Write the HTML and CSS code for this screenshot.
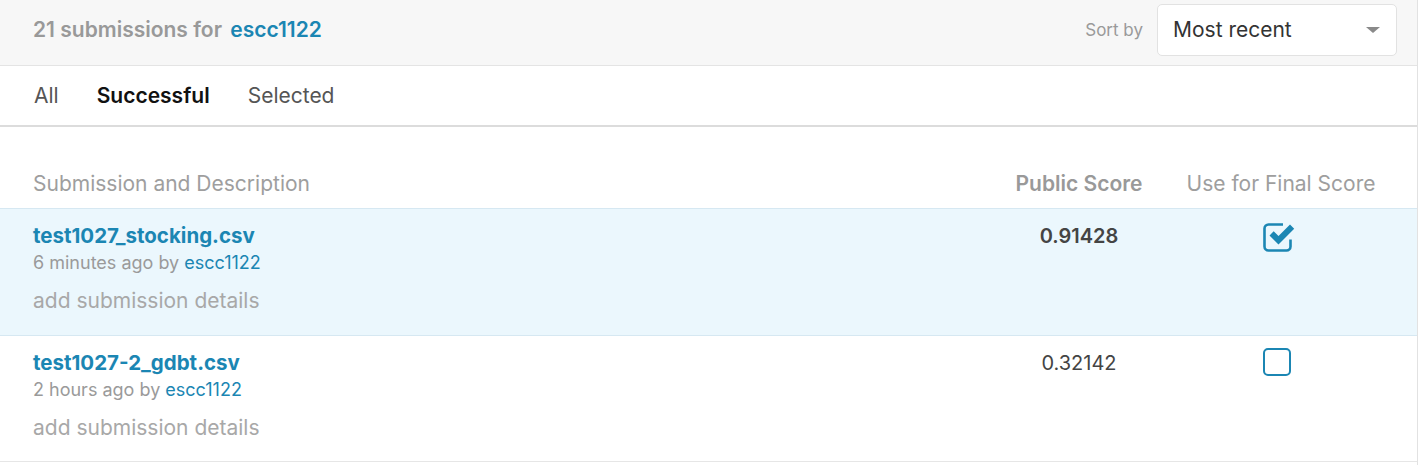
FILE: index.html
```html
<!DOCTYPE html>
<html>
<head>
<meta charset="utf-8">
<link rel="stylesheet" href="styles.css">
</head>
<body>
<div class="page">
  <div class="header">
    <div class="count">21 submissions for <a class="user" href="#">escc1122</a></div>
    <div class="sort">
      <span class="sort-label">Sort by</span>
      <div class="select">
        <span>Most recent</span>
        <span class="caret"></span>
      </div>
    </div>
  </div>
  <div class="tabs">
    <span class="tab">All</span>
    <span class="tab active">Successful</span>
    <span class="tab">Selected</span>
  </div>
  <div class="table">
    <div class="row head">
      <div class="c-name">Submission and Description</div>
      <div class="c-score strong">Public Score</div>
      <div class="c-final">Use for Final Score</div>
    </div>
    <div class="row item selected">
      <div class="c-name">
        <div class="title">test1027_stocking.csv</div>
        <div class="meta">6 minutes ago by <a href="#">escc1122</a></div>
        <div class="details">add submission details</div>
      </div>
      <div class="c-score score bold">0.91428</div>
      <div class="c-final">
        <svg class="cb" width="36" height="32" viewBox="0 0 36 32">
          <path d="M22 4.5H7.5a4 4 0 0 0-4 4v18a4 4 0 0 0 4 4h18a4 4 0 0 0 4-4v-7" fill="none" stroke="#1b86b3" stroke-width="2.6"/>
          <path d="M8.5 15.5l4.2-4.2 4.8 4.8L29 4.6l4.2 4.2-15.7 15.7z" fill="#1b86b3"/>
        </svg>
      </div>
    </div>
    <div class="row item">
      <div class="c-name">
        <div class="title">test1027-2_gdbt.csv</div>
        <div class="meta">2 hours ago by <a href="#">escc1122</a></div>
        <div class="details">add submission details</div>
      </div>
      <div class="c-score score">0.32142</div>
      <div class="c-final">
        <span class="box"></span>
      </div>
    </div>
  </div>
</div>
</body>
</html>
```

FILE: styles.css
```css
* { box-sizing: border-box; }
body {
  margin: 0;
  font-family: Inter, Roboto, "Liberation Sans", sans-serif;
  color: #333;
  background: #fff;
}
a { color: #1b86b3; text-decoration: none; }
.page {
  width: 1418px;
  border-right: 1px solid #e2e2e2;
  height: 465px;
  overflow: hidden;
}
.header {
  height: 66px;
  background: #f7f7f7;
  border-bottom: 1px solid #e4e4e4;
  display: flex;
  align-items: center;
  justify-content: space-between;
  padding: 0 20px 6px 33px;
}
.count {
  font-size: 21px;
  font-weight: 600;
  color: #999;
}
.count .user { margin-left: 3px; }
.sort { display: flex; align-items: center; gap: 14px; }
.sort-label { font-size: 17px; color: #9a9a9a; }
.select {
  width: 240px;
  height: 52px;
  background: #fff;
  border: 1px solid #e2e2e2;
  border-radius: 5px;
  display: flex;
  align-items: center;
  justify-content: space-between;
  padding: 0 16px 0 15px;
  font-size: 21px;
  color: #333;
}
.caret {
  width: 0; height: 0;
  border-left: 7px solid transparent;
  border-right: 7px solid transparent;
  border-top: 6px solid #8a8a8a;
}
.tabs {
  height: 61px;
  border-bottom: 2px solid #dcdcdc;
  display: flex;
  align-items: center;
  gap: 38px;
  padding-left: 34px;
  font-size: 21px;
  color: #555;
}
.tab.active { color: #111; font-weight: 600; }
.row {
  display: grid;
  grid-template-columns: 1fr 184px 220px;
  padding: 0 26px 0 33px;
}
.c-score, .c-final { text-align: center; }
.head {
  height: 82px;
  align-items: center;
  font-size: 21px;
  color: #9e9e9e;
  border-bottom: 1px solid #d6e8f2;
  padding-top: 32px;
}
.head .c-final { padding-left: 8px; }
.head .strong { font-weight: 600; color: #999; }
.item {
  height: 126px;
  padding-top: 14px;
  border-bottom: 1px solid #e6e6e6;
}
.item.selected {
  height: 127px;
  background: #ebf7fd;
  border-bottom: 1px solid #d6e8f2;
}
.title {
  font-size: 20.5px;
  line-height: 26px;
  font-weight: 700;
  color: #1b86b3;
}
.meta {
  font-size: 18px;
  line-height: 24px;
  margin-top: 2px;
  color: #9a9a9a;
}
.details {
  font-size: 21px;
  line-height: 26px;
  margin-top: 13px;
  color: #a8a8a8;
}
.score {
  font-size: 20px;
  line-height: 26px;
  color: #444;
}
.score.bold { font-weight: 600; }
.c-final { display: flex; justify-content: center; padding-right: 8px; }
.cb { margin-top: -3px; margin-left: 4px; }
.box {
  width: 28px;
  height: 28px;
  border: 2.5px solid #1b86b3;
  border-radius: 5px;
  margin-top: -2px;
}
```
